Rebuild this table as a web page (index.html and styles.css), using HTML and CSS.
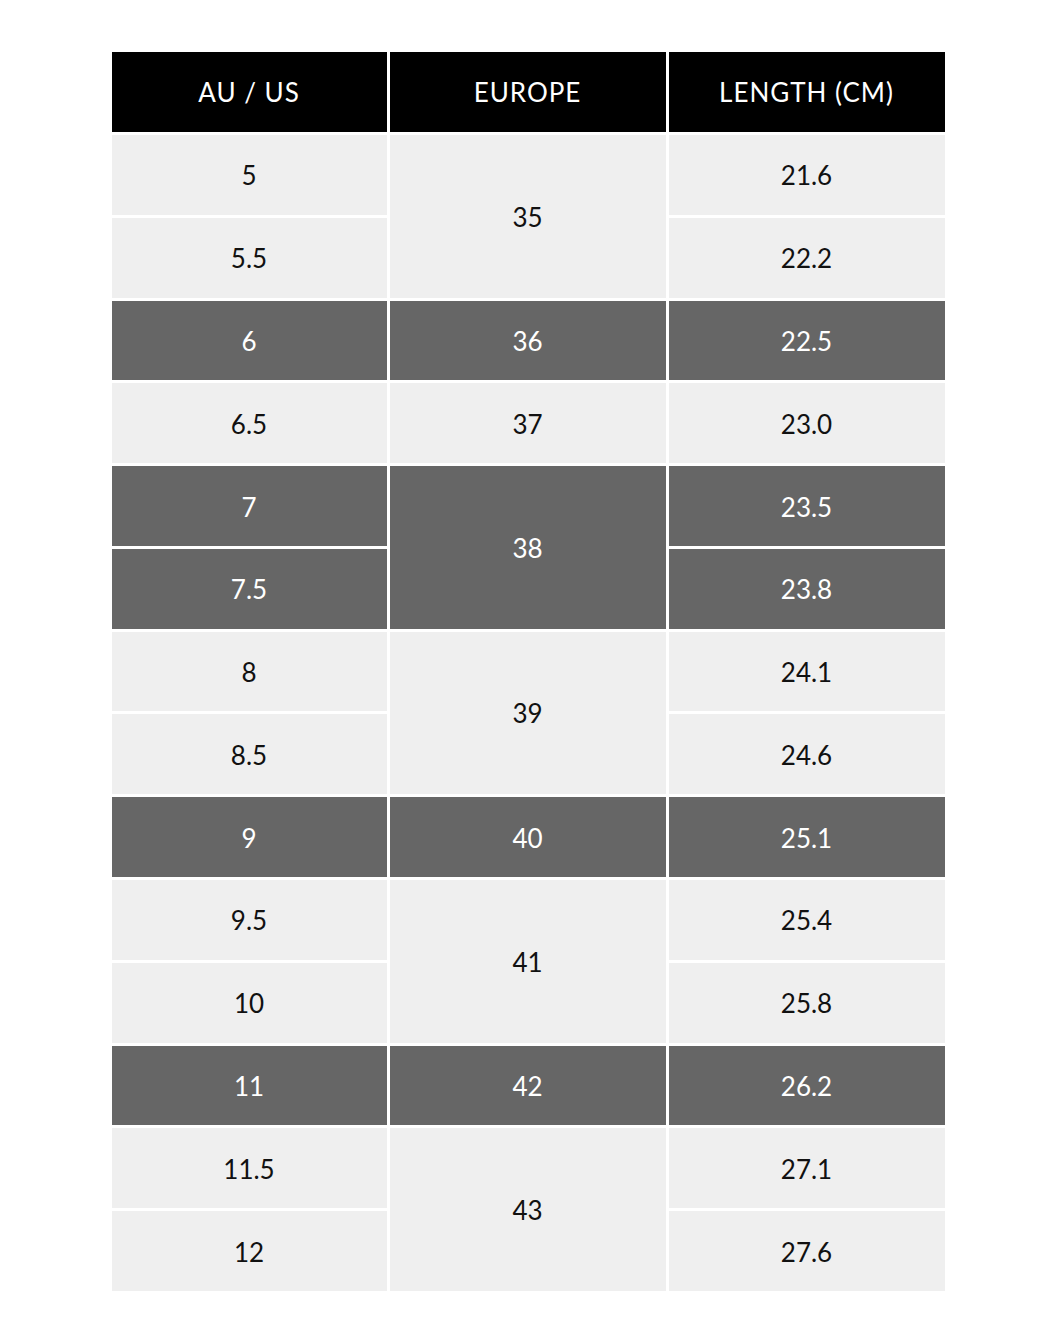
FILE: index.html
```html
<!DOCTYPE html>
<html>
<head>
<meta charset="utf-8">
<link rel="stylesheet" href="styles.css">
</head>
<body>
<div class="chart">
  <div class="cell head">AU / US</div>
  <div class="cell head">EUROPE</div>
  <div class="cell head">LENGTH (CM)</div>

  <div class="cell light">5</div>
  <div class="cell light span2">35</div>
  <div class="cell light">21.6</div>
  <div class="cell light">5.5</div>
  <div class="cell light">22.2</div>

  <div class="cell dark">6</div>
  <div class="cell dark">36</div>
  <div class="cell dark">22.5</div>

  <div class="cell light">6.5</div>
  <div class="cell light">37</div>
  <div class="cell light">23.0</div>

  <div class="cell dark">7</div>
  <div class="cell dark span2">38</div>
  <div class="cell dark">23.5</div>
  <div class="cell dark">7.5</div>
  <div class="cell dark">23.8</div>

  <div class="cell light">8</div>
  <div class="cell light span2">39</div>
  <div class="cell light">24.1</div>
  <div class="cell light">8.5</div>
  <div class="cell light">24.6</div>

  <div class="cell dark">9</div>
  <div class="cell dark">40</div>
  <div class="cell dark">25.1</div>

  <div class="cell light">9.5</div>
  <div class="cell light span2">41</div>
  <div class="cell light">25.4</div>
  <div class="cell light">10</div>
  <div class="cell light">25.8</div>

  <div class="cell dark">11</div>
  <div class="cell dark">42</div>
  <div class="cell dark">26.2</div>

  <div class="cell light">11.5</div>
  <div class="cell light span2">43</div>
  <div class="cell light">27.1</div>
  <div class="cell light">12</div>
  <div class="cell light">27.6</div>
</div>
</body>
</html>
```

FILE: styles.css
```css
html, body {
  margin: 0;
  padding: 0;
  background: #ffffff;
}

body {
  font-family: "Lato", "Open Sans", sans-serif;
}

.chart {
  width: 833px;
  margin: 52px auto 0;
  display: grid;
  grid-template-columns: 275px 276px 276px;
  grid-template-rows: 80px repeat(14, 79.79px);
  gap: 3px;
}

.cell {
  display: flex;
  align-items: center;
  justify-content: center;
  font-size: 26px;
  line-height: 1;
  padding-top: 1px;
}

.head {
  background: #000000;
  color: #ffffff;
  letter-spacing: 1px;
  padding-top: 0;
}

.light {
  background: #efefef;
  color: #111111;
}

.dark {
  background: #666666;
  color: #ffffff;
}

.span2 {
  grid-row: span 2;
}
```
